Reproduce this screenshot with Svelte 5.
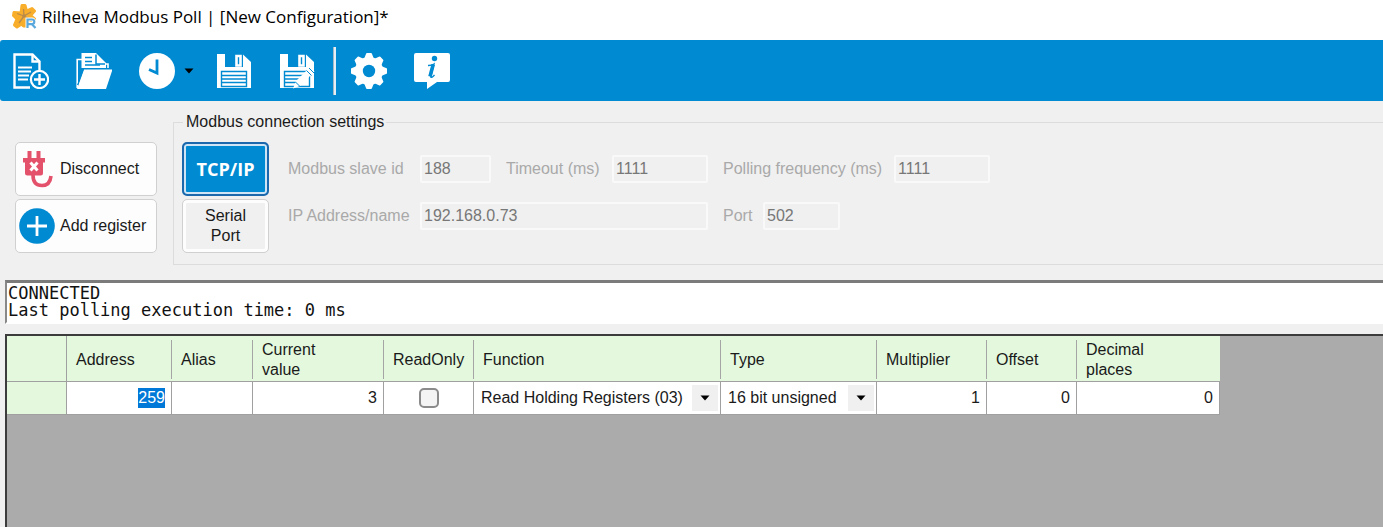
<script>
  import { onMount } from 'svelte';

  let mode = $state('tcp');
  let connected = $state(true);
  let addressInput;

  let slaveId = $state('188');
  let timeout = $state('1111');
  let frequency = $state('1111');
  let host = $state('192.168.0.73');
  let port = $state('502');

  let register = $state({
    address: '259',
    alias: '',
    value: '3',
    readOnly: false,
    fn: 'Read Holding Registers (03)',
    type: '16 bit unsigned',
    multiplier: '1',
    offset: '0',
    decimals: '0'
  });

  const functions = [
    'Read Coils (01)',
    'Read Discrete Inputs (02)',
    'Read Holding Registers (03)',
    'Read Input Registers (04)'
  ];
  const types = ['16 bit unsigned', '16 bit signed', '32 bit unsigned', '32 bit signed', '32 bit float'];

  onMount(() => {
    addressInput.focus();
    addressInput.select();
  });
</script>

{#snippet arrow()}
  <svg class="arrow" width="10" height="6" viewBox="0 0 10 6" aria-hidden="true">
    <path d="M0.5 0.5h9L5 5.5z" fill="#000" />
  </svg>
{/snippet}

{#snippet floppy()}
  <path d="M1 1h8v13h18V1.500L35 9v26H1z" fill="#fff" />
  <path d="M20.500 3h4v9.500h-4z" fill="none" stroke="#fff" stroke-width="2.600" />
  <path d="M5.500 18.500h25v15h-25z" fill="#fff" stroke="#008ad2" stroke-width="1.400" />
{/snippet}

<div class="window">
  <header class="titlebar">
    <svg width="26" height="26" viewBox="0 0 26 26" aria-hidden="true">
      <g fill="#f9ae2b" stroke="#f9ae2b" stroke-width="3" stroke-linejoin="round">
        <path d="M10 1.500h3l1.500 5.500 5.500-2.500 2.500 2.500-4 4.500 4 3.500-2 2.500-5-.5-1.500 5h-2.500l-2-2-4.500 3-2.500-2 2.500-6L1.500 11.500l.5-3 7 .5z" />
      </g>
      <path d="M12 12L11.500 5M12 12L5 9.500M12 12l7-4M12 12l-5 7M12 12l5 3" stroke="#b98a4a" stroke-width="1.300" />
      <circle cx="12" cy="12" r="1.800" fill="#b98a4a" />
      <path d="M15.500 24v-8.500h4.500a2.300 2.300 0 0 1 0 4.600h-4.500M20 20.200l3.500 3.800" fill="none" stroke="#fff" stroke-width="4" />
      <path d="M15.500 24v-8.500h4.500a2.300 2.300 0 0 1 0 4.600h-4.500M20 20.200l3.500 3.800" fill="none" stroke="#5ba8dc" stroke-width="2.200" />
    </svg>
    <h1>Rilheva Modbus Poll | [New Configuration]*</h1>
  </header>

  <nav class="toolbar">
    <button type="button" class="tool" aria-label="New configuration">
      <svg width="36" height="36" viewBox="0 0 36 36" fill="none" stroke="#fff">
        <path d="M17 34.500H1.500v-33h18l7 7V17" stroke-width="2.400" />
        <path d="M19.500 1.500v7h7" stroke-width="2.400" />
        <path d="M5 14.500h14M5 18.500h13M5 22.500h11M5 26.500h10" stroke-width="2" />
        <circle cx="26.500" cy="26.500" r="8.600" stroke-width="2.200" />
        <path d="M26.500 21v11M21 26.500h11" stroke-width="2.400" />
      </svg>
    </button>
    <button type="button" class="tool" aria-label="Open configuration">
      <svg width="36" height="36" viewBox="0 0 36 36">
        <path d="M1.200 35V6.500h5M27 11h5v4" fill="none" stroke="#fff" stroke-width="1.600" />
        <path d="M5.500 15V0h14.500l10 10v5z" fill="#fff" />
        <path d="M20 1.500V11h9" fill="none" stroke="#008ad2" stroke-width="1.500" />
        <path d="M9 4.500h7M9 8.500h7M9 12h15" stroke="#008ad2" stroke-width="1.300" />
        <path d="M8 16.500h28.500L30 36H1z" fill="#fff" />
        <path d="M7.500 16L1.500 32" stroke="#008ad2" />
      </svg>
    </button>
    <div class="tool-group">
      <button type="button" class="tool" aria-label="Recent configurations">
        <svg width="36" height="36" viewBox="0 0 36 36">
          <circle cx="18" cy="18" r="18" fill="#fff" />
          <path d="M18 6.500V20l-8-3.500" fill="none" stroke="#008ad2" stroke-width="2.800" />
        </svg>
      </button>
      <button type="button" class="more" aria-label="Show recent">{@render arrow()}</button>
    </div>
    <button type="button" class="tool" aria-label="Save">
      <svg width="36" height="36" viewBox="0 0 36 36">
        {@render floppy()}
        <path d="M6 22.500h24M6 26h24M6 29.500h24" stroke="#008ad2" stroke-width="1.400" />
      </svg>
    </button>
    <button type="button" class="tool" aria-label="Save as">
      <svg width="36" height="36" viewBox="0 0 36 36">
        {@render floppy()}
        <path d="M6 22.500h19M6 26h15M6 29.500h12" stroke="#008ad2" stroke-width="1.400" />
        <path d="M14 35.500l3-7.500L31 14l4.500 4.500L21 33z" fill="#fff" />
        <path d="M27.500 17.500l5 5M30 15l5 5M16.500 29l4.500 4.500" stroke="#008ad2" stroke-width="1" />
      </svg>
    </button>
    <span class="separator"></span>
    <button type="button" class="tool" aria-label="Settings">
      <svg width="36" height="36" viewBox="0 0 36 36">
        <g fill="#fff">
          <circle cx="18" cy="18" r="14" />
          {#each [0, 45, 90, 135, 180, 225, 270, 315] as angle}
            <path d="M13 6l2-5q.2-1 1-1h4q.8 0 1 1l2 5z" transform="rotate({angle} 18 18)" />
          {/each}
        </g>
        <circle cx="18" cy="18" r="6.200" fill="#008ad2" />
      </svg>
    </button>
    <button type="button" class="tool" aria-label="About">
      <svg width="36" height="36" viewBox="0 0 36 36">
        <path d="M2 0h32q2 0 2 2v25q0 2-2 2H23l-10 7v-7H2q-2 0-2-2V2q0-2 2-2z" fill="#fff" />
        <circle cx="20.500" cy="5.500" r="2.700" fill="#008ad2" />
        <path d="M14 12.500q3 .2 6-1.500l-3 11.500q-.6 2.300.8 1.800 1.200-.4 2.700-2.500" fill="none" stroke="#008ad2" stroke-width="1.400" />
        <path d="M19.200 11.500l-3.200 12" stroke="#008ad2" stroke-width="3.600" />
      </svg>
    </button>
  </nav>

  <section class="connection">
    <div class="actions">
      <button type="button" class="action" onclick={() => (connected = !connected)}>
        <svg width="36" height="40" viewBox="0 0 36 40" aria-hidden="true">
          <g fill="#e4516b">
            <path d="M8.500 2h4v8h-4zM17.500 2h4v8h-4z" />
            <path d="M4 9h22v4.500h-2V24q0 2.500-2.500 2.500h-13Q6 26.500 6 24V13.500H4z" />
          </g>
          <path d="M11.500 13.500l7 8M18.500 13.500l-7 8" stroke="#fff" stroke-width="3" />
          <path d="M14 26q0 10.500 9 10.500 8 0 9-9.500" fill="none" stroke="#e4516b" stroke-width="3.600" />
        </svg>
        {connected ? 'Disconnect' : 'Connect'}
      </button>
      <button type="button" class="action">
        <svg width="36" height="36" viewBox="0 0 36 36" aria-hidden="true">
          <circle cx="18" cy="18" r="17.800" fill="#008ad2" />
          <path d="M18 8v20M8 18h20" stroke="#fff" stroke-width="2.800" />
        </svg>
        Add register
      </button>
    </div>

    <fieldset>
      <legend>Modbus connection settings</legend>
      <div class="modes">
        <button type="button" class="mode" class:active={mode === 'tcp'} onclick={() => (mode = 'tcp')}>TCP/IP</button>
        <button type="button" class="mode" class:active={mode === 'serial'} onclick={() => (mode = 'serial')}>Serial Port</button>
      </div>
      <div class="fields">
        <div class="field-row">
          <label class="lead" for="slave">Modbus slave id</label>
          <input id="slave" class="w-id" bind:value={slaveId} disabled={connected} />
          <label class="w-timeout" for="timeout">Timeout (ms)</label>
          <input id="timeout" class="w-ms" bind:value={timeout} disabled={connected} />
          <label class="w-frequency" for="frequency">Polling frequency (ms)</label>
          <input id="frequency" class="w-ms" bind:value={frequency} disabled={connected} />
        </div>
        <div class="field-row">
          <label class="lead" for="host">IP Address/name</label>
          <input id="host" class="w-host" bind:value={host} disabled={connected} />
          <label class="w-port" for="port">Port</label>
          <input id="port" class="w-portno" bind:value={port} disabled={connected} />
        </div>
      </div>
    </fieldset>
  </section>

  <div class="log" role="log">
    <div>CONNECTED</div>
    <div>Last polling execution time: 0 ms</div>
  </div>

  <main class="grid">
    <table>
      <colgroup>
        <col style:width="60px" />
        <col style:width="105px" />
        <col style:width="81px" />
        <col style:width="131px" />
        <col style:width="90px" />
        <col style:width="247px" />
        <col style:width="156px" />
        <col style:width="110px" />
        <col style:width="90px" />
        <col style:width="143px" />
      </colgroup>
      <thead>
        <tr>
          <th class="corner" aria-label="Row"></th>
          <th>Address</th>
          <th>Alias</th>
          <th>Current<br />value</th>
          <th>ReadOnly</th>
          <th>Function</th>
          <th>Type</th>
          <th>Multiplier</th>
          <th>Offset</th>
          <th>Decimal<br />places</th>
        </tr>
      </thead>
      <tbody>
        <tr>
          <th class="corner" scope="row" aria-label="1"></th>
          <td><input class="cell" aria-label="Address" bind:this={addressInput} bind:value={register.address} /></td>
          <td>{register.alias}</td>
          <td class="number">{register.value}</td>
          <td><input type="checkbox" aria-label="ReadOnly" bind:checked={register.readOnly} /></td>
          <td>
            <div class="combo">
              <select aria-label="Function" bind:value={register.fn}>
                {#each functions as fn}<option>{fn}</option>{/each}
              </select>
              <span class="drop">{@render arrow()}</span>
            </div>
          </td>
          <td>
            <div class="combo">
              <select aria-label="Type" bind:value={register.type}>
                {#each types as type}<option>{type}</option>{/each}
              </select>
              <span class="drop">{@render arrow()}</span>
            </div>
          </td>
          <td class="number">{register.multiplier}</td>
          <td class="number">{register.offset}</td>
          <td class="number">{register.decimals}</td>
        </tr>
      </tbody>
    </table>
  </main>
</div>

<style>
  :global(body) {
    background: #f0f0f0;
  }

  .window {
    display: flex;
    flex-direction: column;
    min-height: 100vh;
    color: #1a1a1a;
    font: 16px/20px "Liberation Sans", Arial, sans-serif;
  }

  .window * {
    box-sizing: border-box;
  }

  button, input, select {
    font: inherit;
    color: inherit;
  }

  .titlebar {
    display: flex;
    align-items: center;
    gap: 4px;
    height: 40px;
    padding: 0 12px 6px;
    background: #fff;
  }

  h1 {
    margin: 0;
    font: 17px/24px "Open Sans", "Noto Sans", sans-serif;
    color: #000;
  }

  .toolbar {
    display: flex;
    align-items: center;
    gap: 15px;
    height: 61px;
    padding: 1px 7px 0;
    background: #008ad2;
    border-radius: 3px 0 0 3px;
  }

  .tool, .more {
    display: flex;
    align-items: center;
    justify-content: center;
    height: 48px;
    padding: 0 6px;
    border: none;
    background: none;
  }

  .tool-group {
    display: flex;
  }

  .more {
    width: 16px;
    margin-right: -2px;
    padding: 0;
  }

  .more .arrow {
    flex: none;
  }

  .separator {
    width: 3px;
    height: 48px;
    margin: 0 -6px 0 -3px;
    background: #e4eef5;
    border-left: 1px solid #a5b8c6;
  }

  .connection {
    display: flex;
    gap: 16px;
    padding: 11px 0 15px 15px;
  }

  .actions {
    display: flex;
    flex-direction: column;
    gap: 3px;
    width: 142px;
    padding-top: 30px;
  }

  .action {
    display: flex;
    align-items: center;
    gap: 5px;
    height: 54px;
    padding: 0 3px;
    border: 1px solid #d0d0d0;
    border-radius: 5px;
    background: #fdfdfd;
    white-space: nowrap;
  }

  fieldset {
    display: flex;
    flex: 1;
    gap: 19px;
    min-width: 0;
    margin: 0;
    padding: 10px 8px 11px;
    border: 1px solid #dcdcdc;
    border-right: none;
  }

  legend {
    margin-left: 1px;
    padding: 0 2px 0 3px;
  }

  .modes {
    display: flex;
    flex-direction: column;
    gap: 3px;
    width: 87px;
  }

  .mode {
    height: 54px;
    padding: 0 16px;
    border: 1px solid #d0d0d0;
    border-radius: 5px;
    background: #f0f0f0;
    box-shadow: inset 0 0 0 3px #fdfdfd;
  }

  .mode.active {
    padding: 0;
    border: 2px solid #1b68ad;
    background: #008ad2;
    box-shadow: inset 0 0 0 2px #cfe4f5;
    color: #fff;
    font: bold 18px/24px "Open Sans", "Noto Sans", sans-serif;
  }

  .fields {
    display: flex;
    flex-direction: column;
    gap: 19px;
    padding-top: 13px;
    color: #a9a9a9;
  }

  .field-row {
    display: flex;
    align-items: center;
  }

  .field-row label {
    flex: none;
    white-space: nowrap;
  }

  .field-row input {
    height: 28px;
    margin-right: 15px;
    padding: 0 2px;
    border: 2px solid #f9f9f9;
    border-radius: 2px;
    background: #f0f0f0;
    color: #777;
  }

  .lead { width: 132px; }
  .w-id { width: 71px; }
  .w-timeout { width: 106px; }
  .w-ms { width: 96px; }
  .w-frequency { width: 171px; }
  .w-host { width: 288px; }
  .w-port { width: 40px; }
  .w-portno { width: 77px; }

  .log {
    margin-left: 5px;
    padding: 2px 1px 3px;
    border: solid;
    border-width: 3px 0 2px 2px;
    border-color: #7b7b7b #fff #fff #888;
    background: #fff;
    color: #111;
    font: 17px/17px "DejaVu Sans Mono", monospace;
  }

  .grid {
    flex: 1;
    margin: 10px 0 0 5px;
    border: solid #3c3c3c;
    border-width: 2px 0 0 2px;
    background: #ababab;
  }

  table {
    table-layout: fixed;
    width: 1213px;
    border-collapse: separate;
    border-spacing: 0;
    text-align: left;
  }

  th {
    height: 46px;
    padding: 3px 0 0 9px;
    border-bottom: 1px solid #a0a0a0;
    background: #e3f8dd linear-gradient(#a5a5a5, #a5a5a5) no-repeat right 4px / 1px 39px;
    font-weight: normal;
  }

  thead th:last-child {
    background-image: none;
  }

  th.corner {
    border-right: 1px solid #a0a0a0;
    background: #e3f8dd;
  }

  td, tbody th {
    height: 33px;
    padding: 0;
    border-right: 1px solid #a0a0a0;
    border-bottom: 1px solid #a0a0a0;
  }

  td {
    background: #fff;
  }

  .number {
    padding-right: 6px;
    text-align: right;
  }

  .cell {
    display: block;
    width: 100%;
    height: 20px;
    padding: 0 6px;
    border: none;
    outline: none;
    text-align: right;
  }

  .cell::selection {
    background: #0078d7;
    color: #fff;
  }

  input[type="checkbox"] {
    appearance: none;
    display: block;
    width: 20px;
    height: 20px;
    margin: 0 auto;
    border: 2px solid #8b8b8b;
    border-radius: 5px;
    background: #f4f4f4;
  }

  input[type="checkbox"]:checked {
    background: #0078d7;
  }

  .combo {
    position: relative;
    display: flex;
    align-items: center;
  }

  select {
    appearance: none;
    width: 100%;
    height: 26px;
    padding: 0 28px 0 7px;
    border: none;
    background: #fff;
  }

  .drop {
    position: absolute;
    top: 0;
    right: 2px;
    display: flex;
    align-items: center;
    justify-content: center;
    width: 26px;
    height: 26px;
    background: #f0f0f0;
    pointer-events: none;
  }
</style>
